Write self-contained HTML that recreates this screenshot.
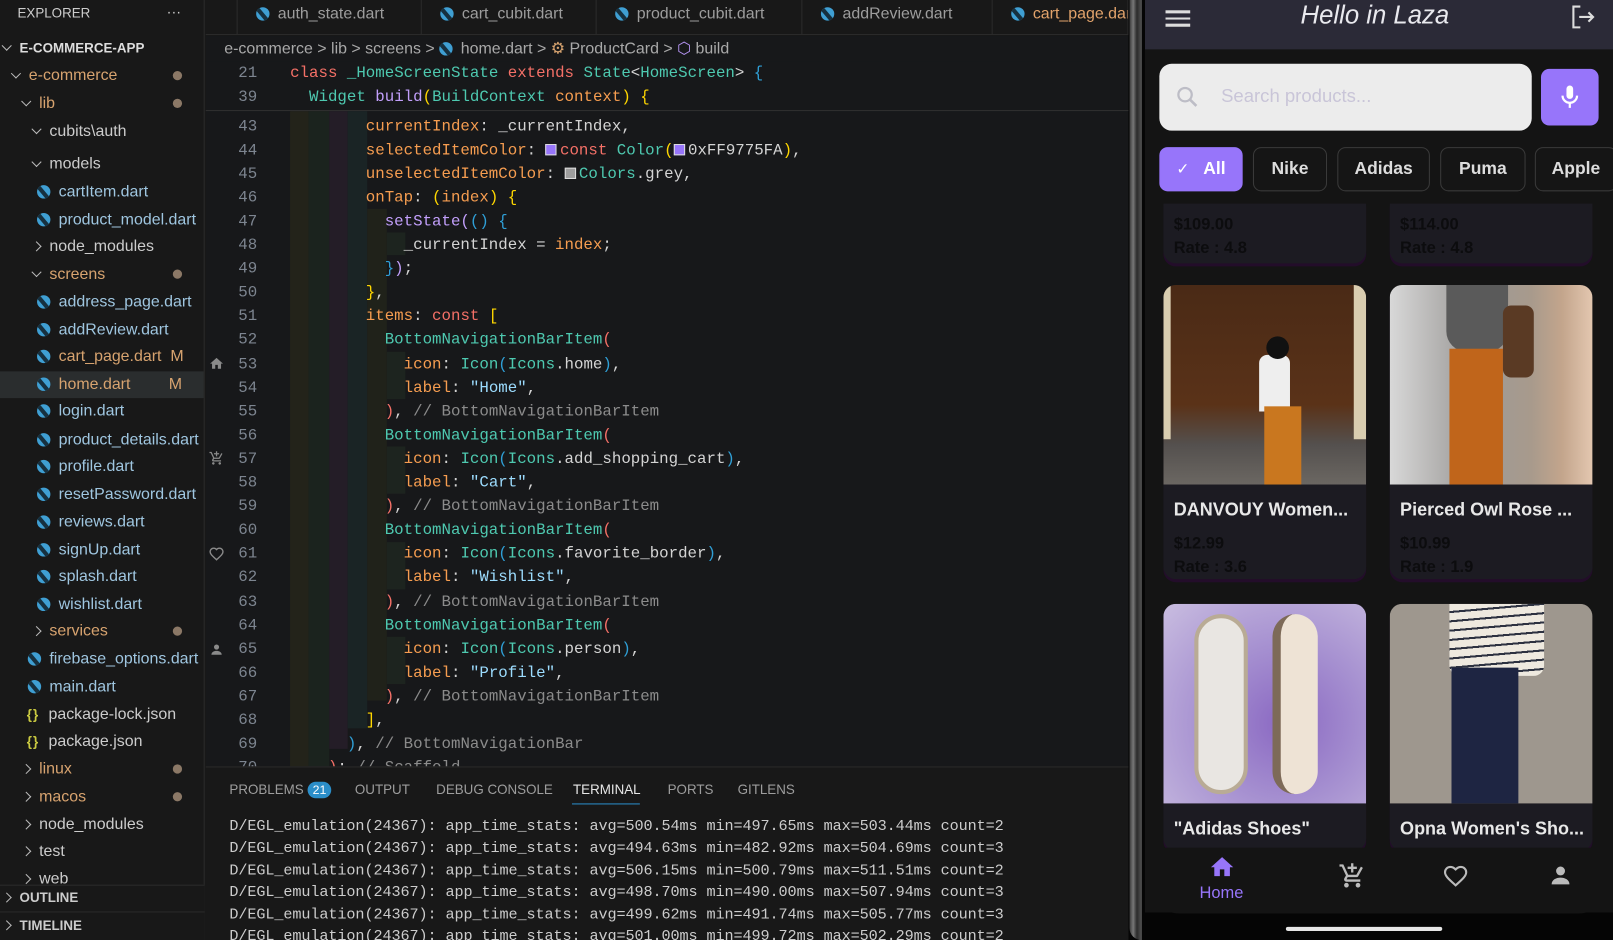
<!DOCTYPE html>
<html><head><meta charset="utf-8">
<style>
*{margin:0;padding:0;box-sizing:border-box}
html,body{width:1613px;height:940px;overflow:hidden;background:#181818}
#w{position:absolute;left:0;top:0;width:1568px;height:914px;transform:scale(1.02870);transform-origin:0 0;font-family:"Liberation Sans",sans-serif;background:#181818;overflow:hidden}
.a{position:absolute;white-space:pre}
.sb{position:absolute;left:0;top:0;width:199px;height:914px;background:#181818;border-right:1px solid #2b2b2b}
.r{position:absolute;height:26px;line-height:26px;font-size:15.5px;color:#cccccc;white-space:nowrap}
.f{color:#9fc6e0}
.o{color:#d7a36f}
.m{color:#d7a36f}
.dot{position:absolute;left:168px;width:9px;height:9px;border-radius:50%;background:#8b7866}
.chev{display:inline-block;width:7px;height:7px;border-right:1.3px solid #bbb;border-bottom:1.3px solid #bbb;transform:rotate(45deg);margin-right:9px;position:relative;top:-3px}
.chr{display:inline-block;width:7px;height:7px;border-right:1.3px solid #bbb;border-bottom:1.3px solid #bbb;transform:rotate(-45deg);margin-right:9px;position:relative;top:-1px}
.di{display:inline-block;width:13px;height:13px;border-radius:50%;background:#3f9fd3;margin-right:8px;position:relative;top:2px;overflow:hidden}
.di:after{content:"";position:absolute;left:3px;top:-3px;width:4px;height:18px;background:#16303f;transform:rotate(-40deg)}
.js{color:#cbcb41;font-weight:bold;font-size:13px;margin-right:9px;letter-spacing:1px}
.code{font-family:"Liberation Mono",monospace;font-size:15.33px;color:#d4d4d4}
.ln{position:absolute;left:205px;width:45px;text-align:right;font-family:"Liberation Mono",monospace;font-size:15.33px;color:#7d8590}
.k{color:#f47067}.p{color:#f69d50}.t{color:#4ec9b0}.s{color:#9cdcfe}.c{color:#8b8b8b}.y{color:#ffd700}.pu{color:#c29ffb}.b{color:#2f9fd6}.wh{color:#d4d4d4}
.sq{display:inline-block;width:11px;height:11px;border:1px solid #ddd;vertical-align:-1px;margin-right:3px}
.tab{position:absolute;top:0;height:34px;line-height:28px;font-size:15.5px;color:#9d9d9d;border-right:1px solid #2b2b2b;padding-left:18px}
.term{position:absolute;left:223px;font-family:"Liberation Mono",monospace;font-size:14.75px;color:#cccccc;letter-spacing:-0.1px}
.ph{position:absolute;font-family:"Liberation Sans",sans-serif}
.chip{position:absolute;top:143px;height:43px;border:1.5px solid #3a3a3a;border-radius:8px;color:#ddd;font-size:17px;font-weight:bold;text-align:center;line-height:40px;background:#151515}
.card{position:absolute;background:#1c1b22;border-radius:12px;overflow:hidden;box-shadow:0 3px 0 #230d2a}
.ct{position:absolute;left:10px;color:#e8e8e8;font-weight:bold;font-size:17.5px;white-space:nowrap}
.cp{position:absolute;left:10px;color:#0c0c0e;font-weight:bold;font-size:16px}
</style></head><body><div id="w">

<div class="sb">
<div class="r" style="left:17px;top:0;font-size:13px;color:#cccccc">EXPLORER</div>
<div class="r" style="left:162px;top:-2px;font-size:14px;color:#ccc">···</div>
<div class="r" style="left:3px;top:34px;font-size:13px;font-weight:bold;color:#ddd"><span class="chev"></span>E-COMMERCE-APP</div>
<div class="r o" style="left:12px;top:61px"><span class="chev"></span>e-commerce</div><div class="dot" style="top:69px"></div>
<div class="r o" style="left:22px;top:88px"><span class="chev"></span>lib</div><div class="dot" style="top:96px"></div>
<div class="r" style="left:32px;top:115px"><span class="chev"></span>cubits\auth</div>
<div class="r" style="left:32px;top:147px"><span class="chev"></span>models</div>
<div class="r f" style="left:36px;top:174px"><span class="di"></span>cartItem.dart</div>
<div class="r f" style="left:36px;top:201px"><span class="di"></span>product_model.dart</div>
<div class="r" style="left:32px;top:227px"><span class="chr"></span>node_modules</div>
<div class="r o" style="left:32px;top:254px"><span class="chev"></span>screens</div><div class="dot" style="top:262px"></div>
<div class="r f" style="left:36px;top:281px"><span class="di"></span>address_page.dart</div>
<div class="r f" style="left:36px;top:308px"><span class="di"></span>addReview.dart</div>
<div class="r m" style="left:36px;top:334px"><span class="di"></span>cart_page.dart&nbsp;&nbsp;M</div>
<div style="position:absolute;left:0;top:361px;width:198px;height:26px;background:#2a2d2e"></div>
<div class="r m" style="left:36px;top:361px"><span class="di"></span>home.dart</div><div class="r m" style="left:164px;top:361px">M</div>
<div class="r f" style="left:36px;top:387px"><span class="di"></span>login.dart</div>
<div class="r f" style="left:36px;top:415px"><span class="di"></span>product_details.dart</div>
<div class="r f" style="left:36px;top:441px"><span class="di"></span>profile.dart</div>
<div class="r f" style="left:36px;top:468px"><span class="di"></span>resetPassword.dart</div>
<div class="r f" style="left:36px;top:495px"><span class="di"></span>reviews.dart</div>
<div class="r f" style="left:36px;top:522px"><span class="di"></span>signUp.dart</div>
<div class="r f" style="left:36px;top:548px"><span class="di"></span>splash.dart</div>
<div class="r f" style="left:36px;top:575px"><span class="di"></span>wishlist.dart</div>
<div class="r o" style="left:32px;top:601px"><span class="chr"></span>services</div><div class="dot" style="top:609px"></div>
<div class="r f" style="left:27px;top:628px"><span class="di"></span>firebase_options.dart</div>
<div class="r f" style="left:27px;top:655px"><span class="di"></span>main.dart</div>
<div class="r" style="left:26px;top:682px;color:#ccc"><span class="js">{}</span>package-lock.json</div>
<div class="r" style="left:26px;top:708px;color:#ccc"><span class="js">{}</span>package.json</div>
<div class="r o" style="left:22px;top:735px"><span class="chr"></span>linux</div><div class="dot" style="top:743px"></div>
<div class="r o" style="left:22px;top:762px"><span class="chr"></span>macos</div><div class="dot" style="top:770px"></div>
<div class="r" style="left:22px;top:789px"><span class="chr"></span>node_modules</div>
<div class="r" style="left:22px;top:815px"><span class="chr"></span>test</div>
<div class="r" style="left:22px;top:842px"><span class="chr"></span>web</div>
<div style="position:absolute;left:0;top:860px;width:199px;height:54px;background:#181818;border-top:1px solid #2b2b2b"></div>
<div class="r" style="left:3px;top:860px;font-size:13px;font-weight:bold;color:#ccc"><span class="chr"></span>OUTLINE</div>
<div style="position:absolute;left:0;top:886px;width:199px;border-top:1px solid #2b2b2b"></div>
<div class="r" style="left:3px;top:887px;font-size:13px;font-weight:bold;color:#ccc"><span class="chr"></span>TIMELINE</div>
</div>

<div style="position:absolute;left:200px;top:0;width:897px;height:34px;background:#181818;border-bottom:1px solid #2b2b2b"></div>
<div class="tab" style="left:230px;width:180px;border-left:1px solid #2b2b2b"><span class="di"></span>auth_state.dart</div>
<div class="tab" style="left:410px;width:170px"><span class="di"></span>cart_cubit.dart</div>
<div class="tab" style="left:580px;width:200px"><span class="di"></span>product_cubit.dart</div>
<div class="tab" style="left:780px;width:185px"><span class="di"></span>addReview.dart</div>
<div class="tab" style="left:965px;width:132px;color:#e2a36b;overflow:hidden;white-space:nowrap"><span class="di"></span>cart_page.dart</div>
<div style="position:absolute;left:200px;top:35px;width:897px;height:710px;background:#17181a"></div>
<div class="a" style="left:218px;top:38px;font-size:15.5px;color:#a9a9a9;line-height:20px">e-commerce &gt; lib &gt; screens &gt; <span class="di"></span>home.dart &gt; <span style="color:#d7a36f">⚙</span> ProductCard &gt; <span style="color:#b392f0">⬡</span> build</div>
<div style="position:absolute;left:282px;top:108px;width:18px;height:637px;background:#23231a"></div>
<div style="position:absolute;left:300px;top:108px;width:20px;height:637px;background:#1b231e"></div>
<div style="position:absolute;left:320px;top:108px;width:18px;height:620px;background:#241d27"></div>
<div style="position:absolute;left:338px;top:108px;width:19px;height:600px;background:#1a2425"></div>
<div style="position:absolute;left:357px;top:203px;width:19px;height:478px;background:#20221a"></div>
<div style="position:absolute;left:376px;top:226px;width:18px;height:22px;background:#1d241f"></div>
<div style="position:absolute;left:376px;top:342px;width:18px;height:46px;background:#1d241f"></div>
<div style="position:absolute;left:376px;top:434px;width:18px;height:46px;background:#1d241f"></div>
<div style="position:absolute;left:376px;top:527px;width:18px;height:46px;background:#1d241f"></div>
<div style="position:absolute;left:376px;top:619px;width:18px;height:46px;background:#1d241f"></div>

<div id="code"></div>
<div style="position:absolute;left:200px;top:60px;width:897px;height:48px;background:#17181a;border-bottom:1px solid #303030"></div>
<div class="ln" style="top:60px;line-height:23.1px">21</div>
<div class="a code" style="left:282px;top:60px;line-height:23.1px"><span class="k">class</span> <span class="t">_HomeScreenState</span> <span class="k">extends</span> <span class="t">State</span>&lt;<span class="t">HomeScreen</span>&gt; <span class="b">{</span></div>
<div class="ln" style="top:83px;line-height:23.1px">39</div>
<div class="a code" style="left:282px;top:83px;line-height:23.1px">  <span class="t">Widget</span> <span class="pu">build</span><span class="y">(</span><span class="t">BuildContext</span> <span class="p">context</span><span class="y">)</span> <span class="y">{</span></div>

<svg class="a" style="left:203px;top:346px" width="15" height="15" viewBox="0 0 24 24"><path d="M10 20v-6h4v6h5v-8h3L12 3 2 12h3v8z" fill="#8a8a8a"/></svg>
<svg class="a" style="left:203px;top:438px" width="15" height="15" viewBox="0 0 24 24"><path d="M11 9h2V6h3V4h-3V1h-2v3H8v2h3v3zm-4 9c-1.1 0-2 .9-2 2s.9 2 2 2 2-.9 2-2-.9-2-2-2zm10 0c-1.1 0-2 .9-2 2s.9 2 2 2 2-.9 2-2-.9-2-2-2zM7.2 14.8l.9-1.8h7.5c.8 0 1.4-.4 1.700-1l3.9-7-1.7-1-3.9 7H8.5L4.3 2H1v2h2l3.6 7.6-1.4 2.4C4.5 15.4 5.5 17 7 17h12v-2H7.4z" fill="#8a8a8a"/></svg>
<svg class="a" style="left:203px;top:531px" width="15" height="15" viewBox="0 0 24 24"><path d="M12 21l-1.4-1.3C5.4 15 2 12 2 8.5 2 5.4 4.4 3 7.5 3c1.7 0 3.4.8 4.5 2.1C13.1 3.8 14.8 3 16.5 3 19.6 3 22 5.4 22 8.5c0 3.5-3.4 6.5-8.6 11.2z" fill="none" stroke="#8a8a8a" stroke-width="2.2"/></svg>
<svg class="a" style="left:203px;top:624px" width="15" height="15" viewBox="0 0 24 24"><circle cx="12" cy="8" r="4" fill="#8a8a8a"/><path d="M4 20c0-4 4-6 8-6s8 2 8 6z" fill="#8a8a8a"/></svg>

<div style="position:absolute;left:200px;top:745px;width:897px;height:169px;background:#181818;border-top:1px solid #2b2b2b"></div>
<div class="a" style="left:223px;top:760px;font-size:13px;color:#9d9d9d">PROBLEMS <span style="display:inline-block;background:#2b8ec9;color:#fff;border-radius:10px;padding:1px 5px;font-size:12px">21</span></div>
<div class="a" style="left:345px;top:760px;font-size:13px;color:#9d9d9d">OUTPUT</div>
<div class="a" style="left:424px;top:760px;font-size:13px;color:#9d9d9d">DEBUG CONSOLE</div>
<div class="a" style="left:557px;top:760px;font-size:13px;color:#e7e7e7">TERMINAL</div>
<div style="position:absolute;left:556px;top:781px;width:66px;height:1px;background:#2b8ec9"></div>
<div class="a" style="left:649px;top:760px;font-size:13px;color:#9d9d9d">PORTS</div>
<div class="a" style="left:717px;top:760px;font-size:13px;color:#9d9d9d">GITLENS</div>
<div class="a term" style="top:796px">D/EGL_emulation(24367): app_time_stats: avg=500.54ms min=497.65ms max=503.44ms count=2</div>
<div class="a term" style="top:817px">D/EGL_emulation(24367): app_time_stats: avg=494.63ms min=482.92ms max=504.69ms count=3</div>
<div class="a term" style="top:839px">D/EGL_emulation(24367): app_time_stats: avg=506.15ms min=500.79ms max=511.51ms count=2</div>
<div class="a term" style="top:860px">D/EGL_emulation(24367): app_time_stats: avg=498.70ms min=490.00ms max=507.94ms count=3</div>
<div class="a term" style="top:882px">D/EGL_emulation(24367): app_time_stats: avg=499.62ms min=491.74ms max=505.77ms count=3</div>
<div class="a term" style="top:903px">D/EGL_emulation(24367): app_time_stats: avg=501.00ms min=499.72ms max=502.29ms count=2</div>

<div style="position:absolute;left:1097px;top:0;width:471px;height:914px;background:#050505"></div>
<div style="position:absolute;left:1098px;top:0;width:12px;height:914px;background:linear-gradient(90deg,#3a3a3a,#777 30%,#2b2b2b 60%,#555);border-radius:0 0 0 40px"></div>
<div style="position:absolute;left:1113px;top:0;width:455px;height:888px;background:#141414;border-radius:0 0 34px 34px;overflow:hidden">
 <div style="position:absolute;left:0;top:0;width:455px;height:48px;background:#2b2a37"></div>
</div>
<div class="ph" style="left:1133px;top:8px;width:24px"><div style="height:2.5px;background:#ddd;margin:2px 0 4px"></div><div style="height:2.5px;background:#ddd;margin-bottom:4px"></div><div style="height:2.5px;background:#ddd"></div></div>
<div class="ph" style="left:1113px;width:447px;top:0;text-align:center;font-style:italic;font-size:25px;color:#e9e9ee;line-height:30px">Hello in Laza</div>
<svg class="a" style="left:1525px;top:3px" width="27" height="27" viewBox="0 0 24 24"><path d="M10 3H4v18h6" fill="none" stroke="#ddd" stroke-width="1.8"/><path d="M9 12h12M17 8l4 4-4 4" fill="none" stroke="#ddd" stroke-width="1.8"/></svg>
<div class="ph" style="left:1127px;top:62px;width:362px;height:65px;background:#ececec;border-radius:12px"></div>
<svg class="a" style="left:1142px;top:82px" width="24" height="24" viewBox="0 0 24 24"><circle cx="10" cy="10" r="6.5" fill="none" stroke="#bdbdc6" stroke-width="2.2"/><path d="M15 15l6 6" stroke="#bdbdc6" stroke-width="2.6"/></svg>
<div class="ph" style="left:1187px;top:83px;font-size:18px;color:#c9c5d8">Search products...</div>
<div class="ph" style="left:1498px;top:67px;width:56px;height:55px;background:#9775fa;border-radius:8px"></div>
<svg class="a" style="left:1513px;top:81px" width="26" height="26" viewBox="0 0 24 24"><rect x="9" y="2" width="6" height="12" rx="3" fill="#fff"/><path d="M5.5 11a6.5 6.5 0 0 0 13 0" fill="none" stroke="#fff" stroke-width="2"/><path d="M12 17.5V22" stroke="#fff" stroke-width="2"/></svg>
<div class="chip" style="left:1127px;width:81px;background:#9775fa;border-color:#9775fa;color:#fff"><span style="font-size:15px;font-weight:normal">✓</span>&nbsp;&nbsp; All</div>
<div class="chip" style="left:1218px;width:72px">Nike</div>
<div class="chip" style="left:1300px;width:90px">Adidas</div>
<div class="chip" style="left:1400px;width:83px">Puma</div>
<div class="chip" style="left:1492px;width:80px">Apple</div>

<div class="card" style="left:1131px;top:198px;width:197px;height:58px;border-radius:0 0 12px 12px"><div class="cp" style="top:12px">$109.00</div><div class="cp" style="top:35px">Rate : 4.8</div></div>
<div class="card" style="left:1351px;top:198px;width:197px;height:58px;border-radius:0 0 12px 12px"><div class="cp" style="top:12px">$114.00</div><div class="cp" style="top:35px">Rate : 4.8</div></div>

<div class="card" style="left:1131px;top:277px;width:197px;height:286px">
 <div style="position:absolute;left:0;top:0;width:197px;height:194px;background:linear-gradient(180deg,#4a2a16 0%,#5a3218 60%,#54504e 80%,#6b6762 100%)">
  <div style="position:absolute;left:0;top:0;width:7px;height:150px;background:#d9cdb0"></div>
  <div style="position:absolute;right:0;top:0;width:12px;height:150px;background:#d9cdb0"></div>
  <div style="position:absolute;left:93px;top:68px;width:30px;height:55px;background:#eee;border-radius:8px 8px 0 0"></div>
  <div style="position:absolute;left:98px;top:118px;width:36px;height:76px;background:#c9771f"></div>
  <div style="position:absolute;left:100px;top:50px;width:22px;height:22px;background:#111;border-radius:50%"></div>
 </div>
 <div class="ct" style="top:208px">DANVOUY Women...</div><div class="cp" style="top:243px">$12.99</div><div class="cp" style="top:266px">Rate : 3.6</div>
</div>
<div class="card" style="left:1351px;top:277px;width:197px;height:286px">
 <div style="position:absolute;left:0;top:0;width:197px;height:194px;background:linear-gradient(90deg,#d8d8d8 0%,#9c9a98 40%,#a89a8c 70%,#c3a58c 85%,#e3c7b0 100%)">
  <div style="position:absolute;left:55px;top:0;width:60px;height:65px;background:#5a5a5a;border-radius:0 0 20px 20px"></div>
  <div style="position:absolute;left:58px;top:62px;width:52px;height:132px;background:#c0651b"></div>
  <div style="position:absolute;left:110px;top:20px;width:30px;height:70px;background:#5a3a24;border-radius:8px"></div>
 </div>
 <div class="ct" style="top:208px">Pierced Owl Rose ...</div><div class="cp" style="top:243px">$10.99</div><div class="cp" style="top:266px">Rate : 1.9</div>
</div>

<div class="card" style="left:1131px;top:587px;width:197px;height:240px">
 <div style="position:absolute;left:0;top:0;width:197px;height:194px;background:radial-gradient(ellipse at 60% 60%,#8a68c2 0%,#a58fd0 45%,#c9bde0 100%)">
  <div style="position:absolute;left:30px;top:10px;width:52px;height:175px;background:#e9e6e2;border-radius:26px;border:4px solid #b9ab95"></div>
  <div style="position:absolute;left:106px;top:10px;width:44px;height:175px;background:#eee3d5;border-radius:22px;border-left:8px solid #7d6a58"></div>
 </div>
 <div class="ct" style="top:208px">"Adidas Shoes"</div>
</div>
<div class="card" style="left:1351px;top:587px;width:197px;height:240px">
 <div style="position:absolute;left:0;top:0;width:197px;height:194px;background:#9e978e">
  <div style="position:absolute;left:58px;top:0;width:92px;height:70px;background:repeating-linear-gradient(175deg,#eee9df 0 7px,#2c3140 7px 9px);border-radius:0 0 10px 10px"></div>
  <div style="position:absolute;left:60px;top:62px;width:65px;height:132px;background:#1e2542"></div>
 </div>
 <div class="ct" style="top:208px">Opna Women's Sho...</div>
</div>

<div style="position:absolute;left:1113px;top:824px;width:455px;height:63px;background:#141414"></div>
<svg class="a" style="left:1175px;top:830px" width="26" height="26" viewBox="0 0 24 24"><path d="M10 20v-6h4v6h5v-8h3L12 3 2 12h3v8z" fill="#9775fa"/></svg>
<div class="ph" style="left:1166px;top:860px;font-size:16px;color:#9775fa">Home</div>
<svg class="a" style="left:1301px;top:838px" width="27" height="27" viewBox="0 0 24 24"><path d="M11 9h2V6h3V4h-3V1h-2v3H8v2h3v3zm-4 9c-1.1 0-2 .9-2 2s.9 2 2 2 2-.9 2-2-.9-2-2-2zm10 0c-1.1 0-2 .9-2 2s.9 2 2 2 2-.9 2-2-.9-2-2-2zM7.2 14.8l.9-1.8h7.5c.8 0 1.4-.4 1.7-1l3.9-7-1.7-1-3.9 7H8.5L4.3 2H1v2h2l3.6 7.6-1.4 2.4C4.5 15.4 5.5 17 7 17h12v-2H7.4z" fill="#bbb"/></svg>
<svg class="a" style="left:1402px;top:839px" width="26" height="26" viewBox="0 0 24 24"><path d="M12 20l-1.3-1.2C5.6 14.2 2.5 11.4 2.5 8.2 2.5 5.5 4.6 3.5 7.3 3.5c1.6 0 3.1.7 4.7 2.2 1.6-1.5 3.1-2.2 4.7-2.2 2.7 0 4.8 2 4.8 4.7 0 3.2-3.1 6-8.2 10.6z" fill="none" stroke="#bbb" stroke-width="1.9"/></svg>
<svg class="a" style="left:1504px;top:838px" width="26" height="26" viewBox="0 0 24 24"><circle cx="12" cy="8" r="4" fill="#bbb"/><path d="M4 20c0-4 4-6 8-6s8 2 8 6z" fill="#bbb"/></svg>
<div style="position:absolute;left:1250px;top:901px;width:152px;height:4px;background:#e6e6e6;border-radius:2px"></div>
</div>
<script>
var L={
43:'        <span class="p">currentIndex</span>: <span class="wh">_currentIndex</span>,',
44:'        <span class="p">selectedItemColor</span>: <span class="sq" style="background:#9775fa"></span><span class="k">const</span> <span class="t">Color</span><span class="y">(</span><span class="sq" style="background:#9775fa"></span>0xFF9775FA<span class="y">)</span>,',
45:'        <span class="p">unselectedItemColor</span>: <span class="sq" style="background:#9e9e9e"></span><span class="t">Colors</span>.grey,',
46:'        <span class="p">onTap</span>: <span class="y">(</span><span class="p">index</span><span class="y">)</span> <span class="y">{</span>',
47:'          <span class="pu">setState</span><span class="pu">(</span><span class="b">()</span> <span class="b">{</span>',
48:'            _currentIndex = <span class="p">index</span>;',
49:'          <span class="b">}</span><span class="pu">)</span>;',
50:'        <span class="y">}</span>,',
51:'        <span class="p">items</span>: <span class="k">const</span> <span class="y">[</span>',
52:'          <span class="t">BottomNavigationBarItem</span><span class="k">(</span>',
53:'            <span class="p">icon</span>: <span class="t">Icon</span><span class="b">(</span><span class="t">Icons</span>.home<span class="b">)</span>,',
54:'            <span class="p">label</span>: <span class="s">"Home"</span>,',
55:'          <span class="k">)</span>, <span class="c">// BottomNavigationBarItem</span>',
56:'          <span class="t">BottomNavigationBarItem</span><span class="k">(</span>',
57:'            <span class="p">icon</span>: <span class="t">Icon</span><span class="b">(</span><span class="t">Icons</span>.add_shopping_cart<span class="b">)</span>,',
58:'            <span class="p">label</span>: <span class="s">"Cart"</span>,',
59:'          <span class="k">)</span>, <span class="c">// BottomNavigationBarItem</span>',
60:'          <span class="t">BottomNavigationBarItem</span><span class="k">(</span>',
61:'            <span class="p">icon</span>: <span class="t">Icon</span><span class="b">(</span><span class="t">Icons</span>.favorite_border<span class="b">)</span>,',
62:'            <span class="p">label</span>: <span class="s">"Wishlist"</span>,',
63:'          <span class="k">)</span>, <span class="c">// BottomNavigationBarItem</span>',
64:'          <span class="t">BottomNavigationBarItem</span><span class="k">(</span>',
65:'            <span class="p">icon</span>: <span class="t">Icon</span><span class="b">(</span><span class="t">Icons</span>.person<span class="b">)</span>,',
66:'            <span class="p">label</span>: <span class="s">"Profile"</span>,',
67:'          <span class="k">)</span>, <span class="c">// BottomNavigationBarItem</span>',
68:'        <span class="y">]</span>,',
69:'      <span class="b">)</span>, <span class="c">// BottomNavigationBar</span>',
70:'    <span class="k">)</span>; <span class="c">// Scaffold</span>'};
var h='';
for(var n=43;n<=70;n++){var t=111.5+(n-43)*23.1;
h+='<div class="ln" style="top:'+t+'px;line-height:23.1px">'+n+'</div><div class="a code" style="left:282px;top:'+t+'px;line-height:23.1px">'+L[n]+'</div>';}
h+='<div style="position:absolute;left:200px;top:745px;width:897px;height:30px;background:#181818"></div>';
document.getElementById('code').innerHTML=h;
</script>
</body></html>
